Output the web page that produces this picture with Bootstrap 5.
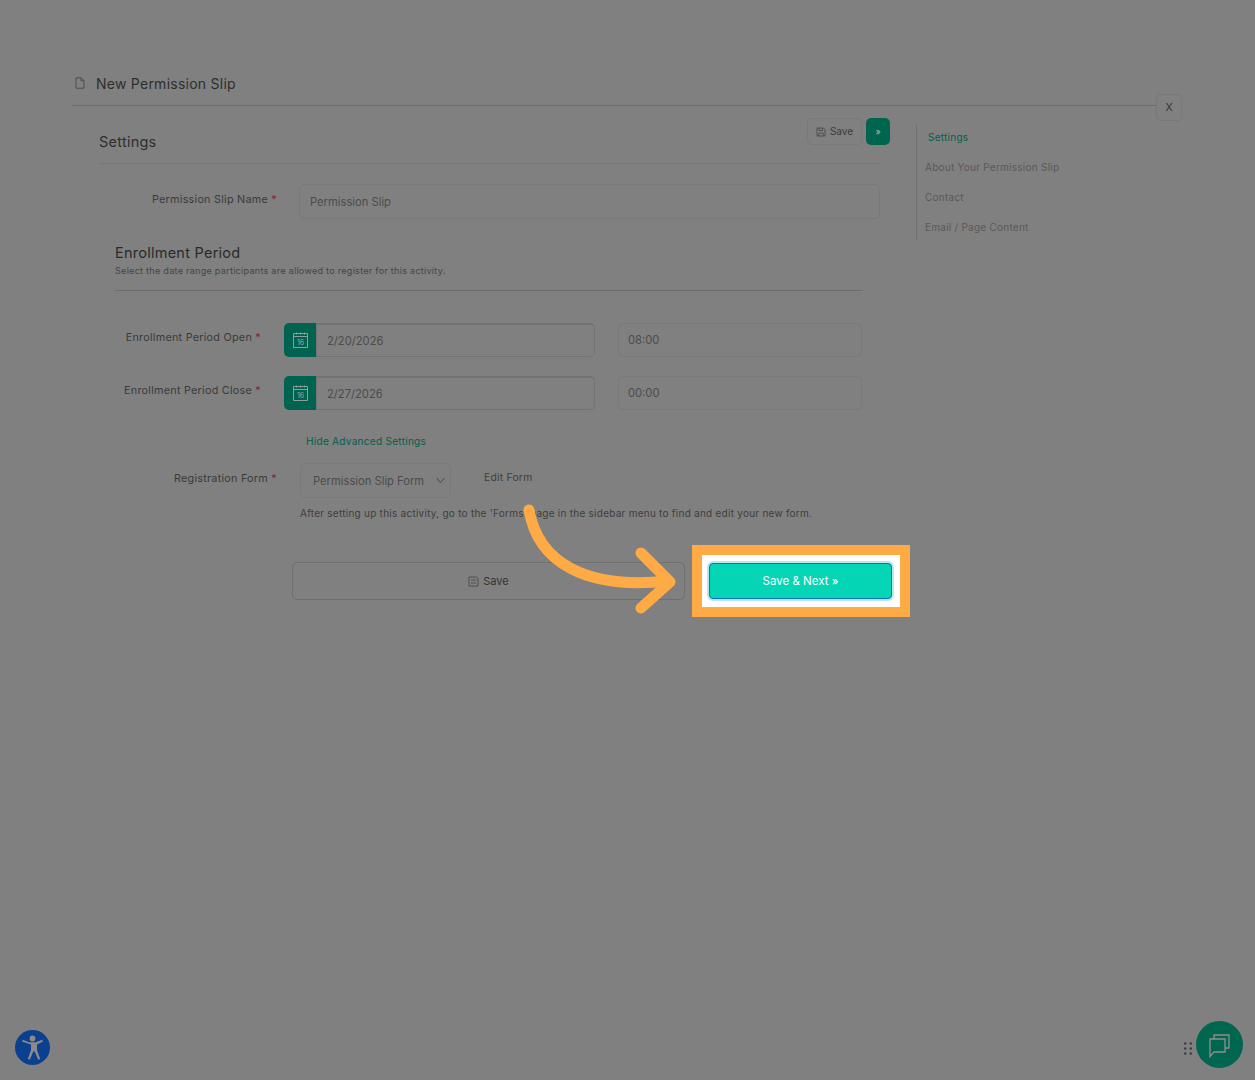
<!DOCTYPE html>
<html lang="en">
<head>
  <meta charset="UTF-8">
  <meta name="viewport" content="width=device-width, initial-scale=1.0">
  <title>New Permission Slip</title>
  <link href="https://cdn.jsdelivr.net/npm/bootstrap@5.3.0/dist/css/bootstrap.min.css" rel="stylesheet">
  <style>
    body { background: #808080; color: #333; font-family: Inter, "Liberation Sans", sans-serif; height: 1080px; overflow: hidden; position: relative; letter-spacing: .25px; }
    .shell { padding: 70px 98px 0 72px; }
    .slip-head { height: 36px; border-bottom: 1px solid #6c6c6c; padding-left: 3px; padding-bottom: 8px; font-size: 14px; color: #2e2e2e; }
    .slip-head svg { margin-right: 11px; margin-top: -1px; }
    .close-x { position: absolute; left: 1156px; top: 94px; width: 26px; height: 27px; border: 1px solid #787878; border-radius: 5px; background: #808080; font-size: 10.5px; color: #333; padding: 0; }
    .page-row { margin-left: 27px; }
    .main-col { width: 781px; flex: none; }
    .settings-head { height: 58px; border-bottom: 1px solid #787878; }
    .settings-head h5 { font-size: 14.5px; line-height: 20px; padding-top: 26px; margin: 0; font-weight: 400; color: #2e2e2e; }
    .top-btns { margin-top: 12px; margin-right: -10px; }
    .btn-ghost { height: 27px; width: 55px; border: 1px solid #797979; border-radius: 5px; color: #3a3a3a; font-size: 10px; padding: 0; }
    .btn-go { height: 27px; width: 24px; background: #00654f; border: 0; border-radius: 5px; color: #b5b5b5; font-size: 9px; padding: 0; }
    .lbl { font-size: 10.8px; text-align: right; color: #3a3a3a; flex: none; margin: 0; line-height: 14px; }
    .req { color: #8a2020; }
    .name-row { margin-top: 20px; }
    .name-row .lbl { width: 178px; margin-top: 9px; }
    .name-row .form-control { margin-left: 22px; width: 581px; height: 35px; padding-left: 10px; padding-top: 6px; }
    .form-control, .form-select { background-color: transparent; border-color: #797979; font-size: 11.2px; color: #4c4c4c; border-radius: 5px; box-shadow: none; }
    .enroll { margin-left: 16px; width: 748px; }
    .enroll h5 { font-size: 14.5px; line-height: 20px; margin: 24px 0 0; font-weight: 400; color: #2a2a2a; }
    .enroll-sub { font-size: 9.1px; line-height: 14px; color: #454545; padding-top: 1px; padding-bottom: 12px; border-bottom: 1px solid #6c6c6c; }
    .date-row { height: 34px; }
    .date-row .lbl { width: 146px; margin-top: 8px; }
    .date-row .input-group { width: 311px; margin-left: 23px; height: 34px; flex: none; }
    .cal-btn { width: 33px; padding: 0; background: #00634f; border: 0; border-radius: 5px 0 0 5px; display: flex; align-items: center; justify-content: center; }
    .date-row .input-group .form-control { border-width: 2px 1px 1px 1px; border-color: #737373; height: 34px; padding-left: 10px; border-radius: 0 5px 5px 0; }
    .time-box { width: 244px; margin-left: 23px; flex: none; height: 34px; padding-left: 9px; }
    .adv-link { display: block; margin: 24px 0 0 191px; font-size: 10.1px; line-height: 14px; color: #00604c; text-decoration: none; }
    .reg-row { margin-top: 15px; }
    .reg-row .lbl { width: 178px; margin-top: 9px; }
    .reg-row .form-select { width: 151px; height: 35px; margin-left: 23px; flex: none; padding: 2px 0 0 12px; background-position: right 4px center; background-size: 11px; background-image: url("data:image/svg+xml,%3csvg xmlns='http://www.w3.org/2000/svg' viewBox='0 0 16 16'%3e%3cpath fill='none' stroke='%233c3c3c' stroke-linecap='round' stroke-width='1.2' d='M3 5l5 6 5-6'/%3e%3c/svg%3e"); }
    .edit-form { margin: 7px 0 0 33px; font-size: 10.3px; line-height: 14px; color: #3e3e3e; }
    .help-line { margin: 8px 0 0 201px; font-size: 10px; line-height: 14px; color: #3e3e3e; white-space: nowrap; }
    .save-row { margin: 42px 0 0 193px; }
    .btn-save-wide { width: 393px; height: 38px; border: 1px solid #707070; border-radius: 5px; font-size: 11px; color: #333; padding: 0; flex: none; }
    .spot-wrap { position: relative; margin: 1px 0 0 24px; width: 183px; height: 36px; flex: none; isolation: isolate; }
    .spot-box { position: absolute; left: -17px; top: -18px; width: 218px; height: 72px; border: 10px solid #ffab45; background: #fff; z-index: -1; }
    .btn-next { width: 183px; height: 36px; background: #04d6b5; border: 1px solid #0d6fcc; border-radius: 4px; color: #fff; font-size: 11.5px; padding: 1px 0 0; box-shadow: 0 0 0 2px #b7e9ea; }
    .side-col { margin: 19px 0 0 36px; height: 115px; width: 220px; border-left: 1px solid #707070; }
    .side-col ul { margin-top: -3px; }
    .side-item { line-height: 30px; height: 30px; font-size: 10px; padding-left: 8px; color: #595959; white-space: nowrap; }
    .side-item.on { padding-left: 11px; color: #00604c; }
    .arrow-layer { position: absolute; left: 0; top: 0; pointer-events: none; }
    .access-btn { position: absolute; left: 15px; top: 1030px; width: 35px; height: 35px; border-radius: 50%; background: #0b3f90; border: 0; padding: 0; }
    .chat-btn { position: absolute; left: 1196px; top: 1021px; width: 47px; height: 47px; border-radius: 50%; background: #00664f; border: 0; padding: 0; }
    .grip { position: absolute; left: 1184px; top: 1042px; width: 8px; height: 13px; }
  </style>
</head>
<body>
  <div class="shell">
    <div class="slip-head d-flex align-items-center">
      <svg width="10" height="12" viewBox="0 0 10 12" fill="none" stroke="#4c4c4c" stroke-width="1"><path d="M1 .8h5l3 3v7.400H1zM6 .8v3h3"/></svg>
      <span>New Permission Slip</span>
    </div>

    <div class="page-row d-flex">
      <div class="main-col">
        <div class="settings-head d-flex justify-content-between align-items-start">
          <h5>Settings</h5>
          <div class="top-btns d-flex gap-1">
            <button class="btn btn-ghost d-flex align-items-center justify-content-center gap-1">
              <svg width="10" height="10" viewBox="0 0 10 10" fill="none" stroke="#4c4c4c" stroke-width=".9"><path d="M1 1h6.500L9 2.500V9H1zM3 1v2.500h3.500V1M2.800 9V6h4.400v3"/></svg>Save
            </button>
            <button class="btn btn-go">»</button>
          </div>
        </div>

        <div class="name-row d-flex align-items-start">
          <label class="lbl">Permission Slip Name <span class="req">*</span></label>
          <input class="form-control" value="Permission Slip">
        </div>

        <div class="enroll">
          <h5>Enrollment Period</h5>
          <div class="enroll-sub">Select the date range participants are allowed to register for this activity.</div>

          <div class="date-row d-flex align-items-start" style="margin-top: 32px">
            <label class="lbl">Enrollment Period Open <span class="req">*</span></label>
            <div class="input-group">
              <button class="cal-btn">
                <svg width="15" height="16" viewBox="0 0 15 16" fill="none" stroke="#a3a3a3" stroke-width=".9"><path d="M.5 1.500h14v14H.5zM.5 4.500h14M3.500 .5v2M7.500 .5v2M11.500 .5v2"/><text x="7.500" y="12.500" font-size="7" text-anchor="middle" fill="#a3a3a3" stroke="none">16</text></svg>
              </button>
              <input class="form-control" value="2/20/2026">
            </div>
            <input class="form-control time-box" value="08:00">
          </div>

          <div class="date-row d-flex align-items-start" style="margin-top: 19px">
            <label class="lbl">Enrollment Period Close <span class="req">*</span></label>
            <div class="input-group">
              <button class="cal-btn">
                <svg width="15" height="16" viewBox="0 0 15 16" fill="none" stroke="#a3a3a3" stroke-width=".9"><path d="M.5 1.500h14v14H.5zM.5 4.500h14M3.500 .5v2M7.500 .5v2M11.500 .5v2"/><text x="7.500" y="12.500" font-size="7" text-anchor="middle" fill="#a3a3a3" stroke="none">16</text></svg>
              </button>
              <input class="form-control" value="2/27/2026">
            </div>
            <input class="form-control time-box" value="00:00">
          </div>

          <a class="adv-link" href="#">Hide Advanced Settings</a>
        </div>

        <div class="reg-row d-flex align-items-start">
          <label class="lbl">Registration Form <span class="req">*</span></label>
          <select class="form-select"><option>Permission Slip Form</option></select>
          <div class="edit-form">Edit Form</div>
        </div>
        <div class="help-line">After setting up this activity, go to the 'Forms' page in the sidebar menu to find and edit your new form.</div>

        <div class="save-row d-flex align-items-start">
          <button class="btn btn-save-wide d-flex align-items-center justify-content-center gap-1">
            <svg width="11" height="11" viewBox="0 0 11 11" fill="none" stroke="#4a4a4a" stroke-width=".9"><path d="M1 1h7.500L10 2.500V10H1zM3 4h5M3 7h5"/></svg>Save
          </button>
          <div class="spot-wrap">
            <span class="spot-box"></span>
            <button class="btn btn-next">Save &amp; Next »</button>
          </div>
        </div>
      </div>

      <div class="side-col">
        <ul class="list-unstyled">
          <li class="side-item on">Settings</li>
          <li class="side-item">About Your Permission Slip</li>
          <li class="side-item">Contact</li>
          <li class="side-item">Email / Page Content</li>
        </ul>
      </div>
    </div>
  </div>

  <button class="close-x">X</button>

  <svg class="arrow-layer" width="1255" height="1080" viewBox="0 0 1255 1080" fill="none" stroke="#ffab45" stroke-width="11" stroke-linecap="round" stroke-linejoin="round">
    <path d="M529 510C538 562 585 590 668 581"/>
    <path d="M641 553L670 582L641 608"/>
  </svg>

  <button class="access-btn">
    <svg class="d-block" width="35" height="35" viewBox="0 0 35 35" fill="#8a8a8a"><circle cx="17.500" cy="8.500" r="2.900"/><path d="M7 11.600l.8-1.800 6.200 2.500h7l6.200-2.500.8 1.800-6 3v5.400l3.200 9-2 .8-3.500-8.300h-1.400l-3.500 8.300-2-.8 3.200-9v-5.400z"/></svg>
  </button>

  <div class="grip">
    <svg class="d-block" width="8" height="13" viewBox="0 0 8 13" fill="#3c3c3c"><circle cx="1.200" cy="1.500" r="1.200"/><circle cx="6.800" cy="1.500" r="1.200"/><circle cx="1.200" cy="6.500" r="1.200"/><circle cx="6.800" cy="6.500" r="1.200"/><circle cx="1.200" cy="11.500" r="1.200"/><circle cx="6.800" cy="11.500" r="1.200"/></svg>
  </div>
  <button class="chat-btn">
    <svg class="d-block" width="47" height="47" viewBox="0 0 47 47" fill="none" stroke="#8f8f8f" stroke-width="1.300"><path d="M14 18h15v13H18l-4 4.500zM18 18v-4h15v13h-4"/></svg>
  </button>
</body>
</html>
